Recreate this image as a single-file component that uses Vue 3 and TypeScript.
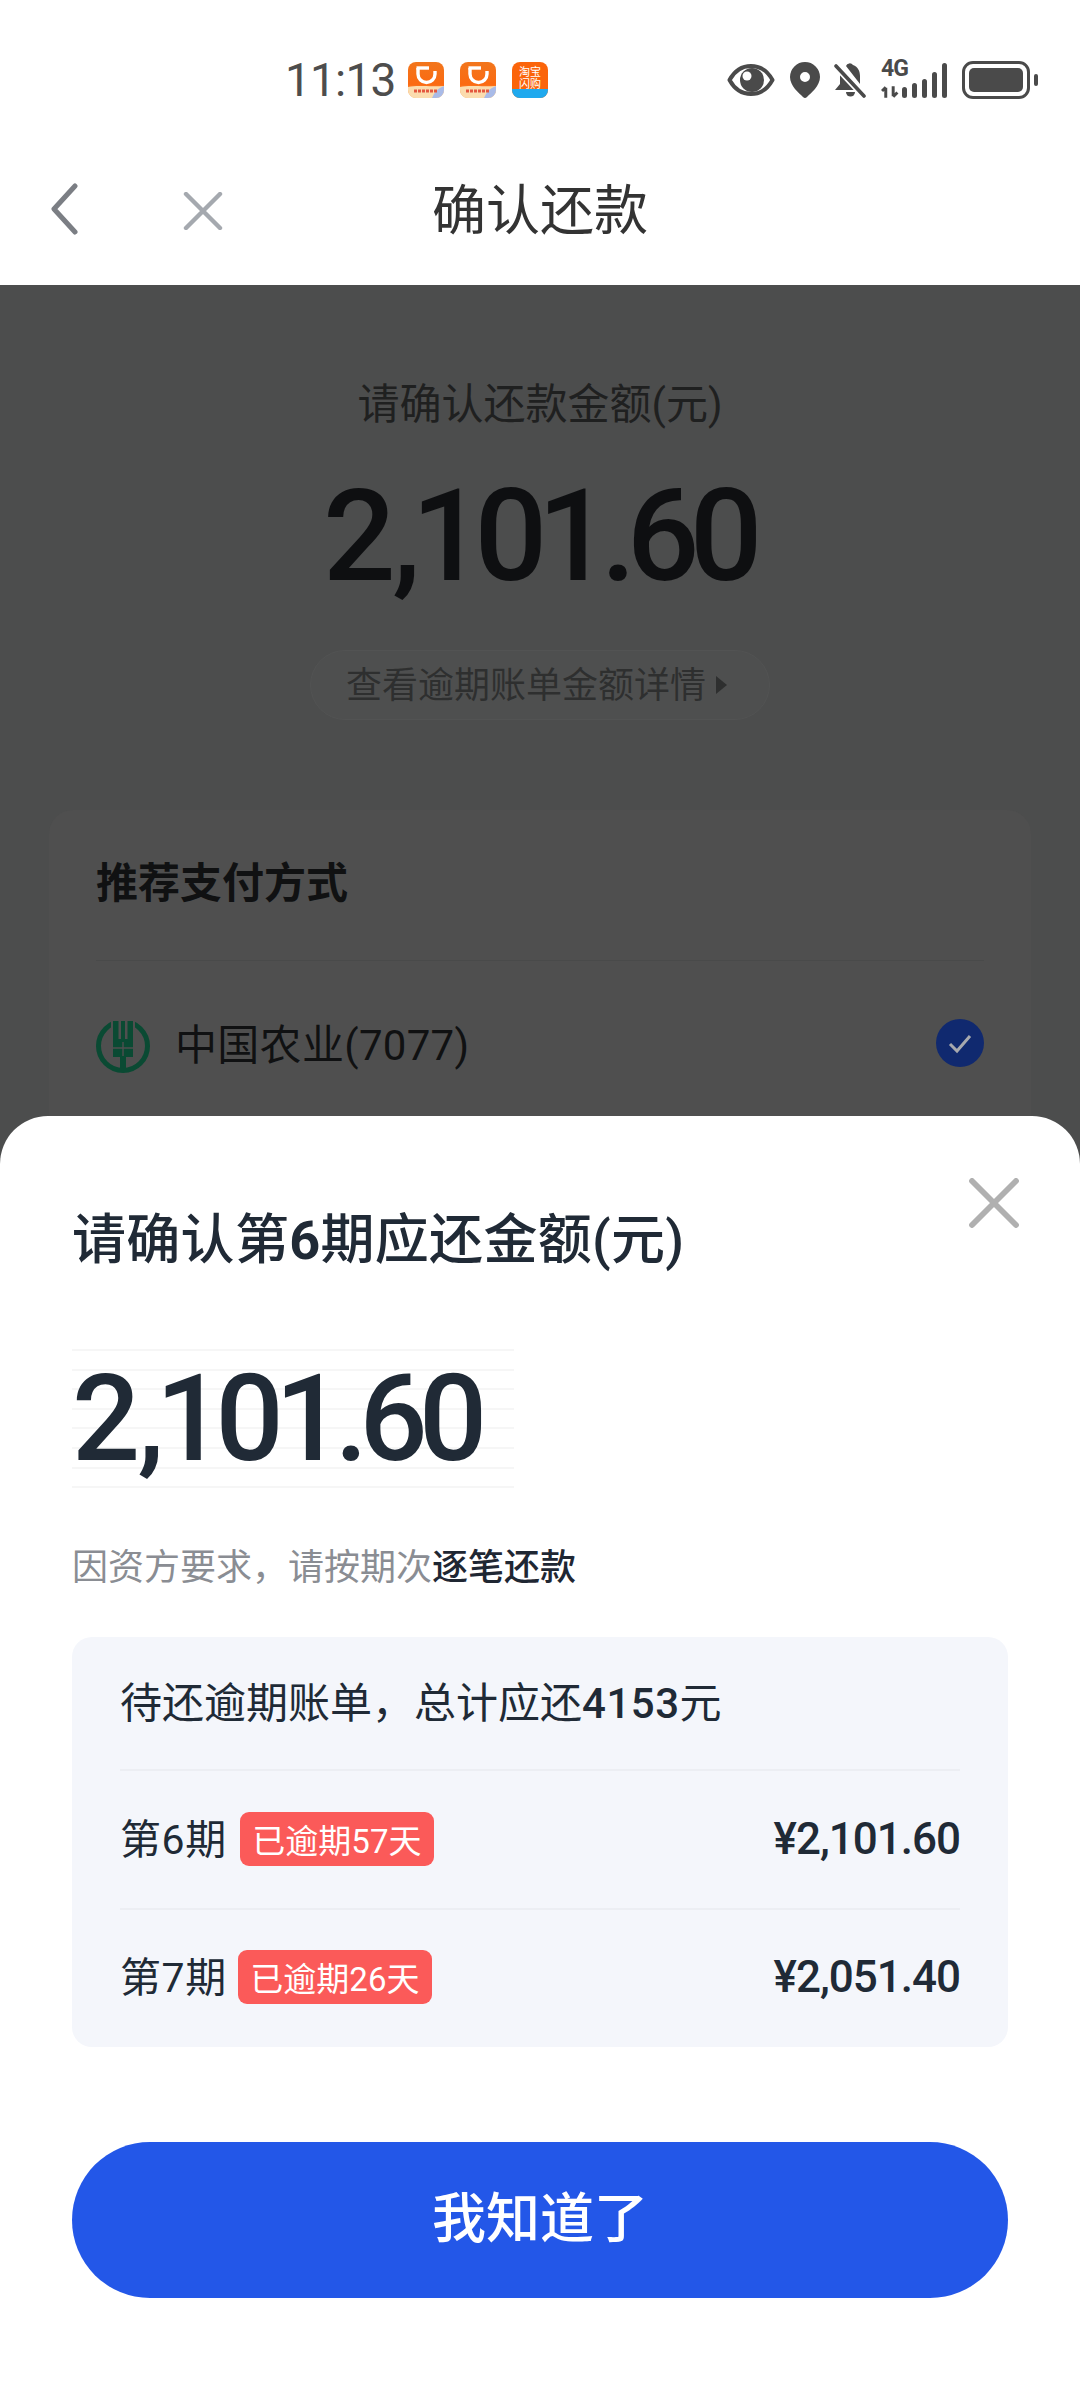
<script setup lang="ts">
interface Row { period: string; tag: string; amount: string }
const rows: Row[] = [
  { period: '第6期', tag: '已逾期57天', amount: '¥2,101.60' },
  { period: '第7期', tag: '已逾期26天', amount: '¥2,051.40' },
]
const signal: number[] = [11, 15, 19, 26, 35]
</script>

<template>
  <div class="screen">
    <header class="status">
      <span class="time">11:13</span>
      <div class="apps">
        <svg v-for="n in 2" :key="n" class="app" viewBox="0 0 36 36">
          <defs>
            <linearGradient :id="'o' + n" x1="0" y1="0" x2="0" y2="1">
              <stop offset="0" stop-color="#f2761c" />
              <stop offset=".62" stop-color="#fb6a12" />
              <stop offset="1" stop-color="#fbb56a" />
            </linearGradient>
          </defs>
          <rect width="36" height="36" rx="8" :fill="'url(#o' + n + ')'" />
          <path d="M0 25c10-2 20 0 36-1v4a8 8 0 0 1-8 8H8a8 8 0 0 1-8-8z" fill="#fbdcae" />
          <path d="M24 36c2-5 6-10 12-12v4a8 8 0 0 1-8 8z" fill="#a9bbe8" />
          <path d="M6 29h24" stroke="#e4573f" stroke-width="3" stroke-dasharray="3 1" />
          <path d="M10 6v6a8.5 8.5 0 0 0 17 0V9" fill="none" stroke="#fff" stroke-width="3.4" />
          <path d="M8.5 6H21" stroke="#fff" stroke-width="3.4" />
        </svg>
        <svg class="app" viewBox="0 0 36 36">
          <rect width="36" height="36" rx="8" fill="#fb640a" />
          <path d="M0 27h36v1a8 8 0 0 1-8 8H8a8 8 0 0 1-8-8z" fill="#1fa9ee" />
          <text x="18" y="14" class="mini">淘宝</text>
          <text x="18" y="25.5" class="mini">闪购</text>
        </svg>
      </div>
      <div class="sys">
        <svg class="eye" viewBox="0 0 48 32">
          <path d="M2.5 16C8 6 15 2 24 2s16 4 21.5 14C40 26 33 30 24 30S8 26 2.5 16z" fill="none" stroke="#4a4a4a" stroke-width="4" stroke-linejoin="round" />
          <circle cx="25" cy="16" r="12" fill="#4a4a4a" />
          <circle cx="20" cy="12" r="4.5" fill="#fff" />
        </svg>
        <svg class="pin" viewBox="0 0 30 36">
          <path fill-rule="evenodd" d="M15 0a15 15 0 0 1 15 15c0 9-9 16-13 20a3 3 0 0 1-4 0C9 31 0 24 0 15A15 15 0 0 1 15 0zm0 10a5 5 0 1 0 0 10 5 5 0 0 0 0-10z" fill="#4a4a4a" />
        </svg>
        <svg class="bell" viewBox="0 0 32 36">
          <path d="M12 4a4 4 0 0 1 7-1c5 2 7 6 7 11v8z" fill="#4a4a4a" />
          <path d="M6 11v11l-5 6h23z" fill="#4a4a4a" />
          <path d="M12 30h9a4.5 4.5 0 0 1-9 0z" fill="#4a4a4a" />
          <path d="M2 4l28 30" stroke="#fff" stroke-width="7" />
          <path d="M2 4l28 30" stroke="#4a4a4a" stroke-width="3.6" stroke-linecap="round" />
        </svg>
        <div class="net">
          <span class="g4">4G</span>
          <svg class="updown" viewBox="0 0 17 11">
            <path d="M4.5 11V1.5M1 4.5l3.5-3.5M11.5 0v9.5M15.5 6l-4 4" fill="none" stroke="#4a4a4a" stroke-width="2.8" />
          </svg>
          <div class="bars">
            <i v-for="(h, i) in signal" :key="i" class="bar" :style="{ height: h + 'px' }"></i>
          </div>
        </div>
        <div class="battery"><i class="level"></i></div>
        <i class="nub"></i>
      </div>
    </header>

    <nav class="nav">
      <svg class="back" viewBox="0 0 30 52">
        <path d="M26 3L5 26l21 23" fill="none" stroke="#7b7e84" stroke-width="5" stroke-linecap="round" stroke-linejoin="round" />
      </svg>
      <svg class="cross" viewBox="0 0 40 38">
        <path d="M3 2l34 34M37 2L3 36" fill="none" stroke="#a5a9af" stroke-width="4.4" stroke-linecap="round" />
      </svg>
      <h1 class="nav-title">确认还款</h1>
    </nav>

    <main class="dim">
      <p class="dim-label">请确认还款金额(元)</p>
      <p class="dim-amount">2<span class="comma">,</span>101.60</p>
      <div class="pill"><span class="pill-text">查看逾期账单金额详情</span><i class="tri"></i></div>
      <section class="card">
        <h2 class="card-title">推荐支付方式</h2>
        <div class="card-row">
          <svg class="abc" viewBox="0 0 54 54">
            <circle cx="27" cy="27" r="24.5" fill="none" stroke="#0a4a33" stroke-width="5" />
            <path d="M15 0h24v20H15z" fill="#4f4f4f" />
            <path d="M17 2h5.5v20H17zM31.5 2H37v20h-5.5zM25 2h4v20h-4z" fill="#0a4a33" />
            <path d="M17 20h20v18H17zM24 37h6v16h-6z" fill="#0a4a33" />
            <path d="M17 29h20M27 23v14" stroke="#4f4f4f" stroke-width="1.4" />
          </svg>
          <span class="bank">中国农业(7077)</span>
          <svg class="tick" viewBox="0 0 48 48">
            <circle cx="24" cy="24" r="24" fill="#10296f" />
            <path d="M14 25l7 7 13-15" fill="none" stroke="#a7a9ae" stroke-width="3" />
          </svg>
        </div>
      </section>
    </main>

    <section class="sheet">
      <svg class="sheet-close" viewBox="0 0 50 50">
        <path d="M3 3l44 44M47 3L3 47" fill="none" stroke="#b0b0b0" stroke-width="5.8" stroke-linecap="round" />
      </svg>
      <h2 class="sheet-title">请确认第<b>6</b>期应还金额(元)</h2>
      <div class="hero"><span class="hero-num">2<span class="comma">,</span>101.60</span></div>
      <p class="note">因资方要求，请按期次<b>逐笔还款</b></p>
      <div class="panel">
        <div class="panel-head"><span class="head-text">待还逾期账单，总计应还<b>4153</b>元</span></div>
        <div v-for="r in rows" :key="r.period" class="panel-row">
          <span class="period">{{ r.period }}</span>
          <span class="tag">{{ r.tag }}</span>
          <span class="price">{{ r.amount }}</span>
        </div>
      </div>
      <button class="cta" type="button"><span class="cta-text">我知道了</span></button>
    </section>
  </div>
</template>

<style>
html, body { margin: 0; background: #fff; }
</style>

<style scoped>
.screen {
  position: relative;
  width: 1080px;
  height: 2400px;
  overflow: hidden;
  background: #fff;
  font-family: Roboto, "Noto Sans CJK SC", sans-serif;
}
p, h1, h2 { margin: 0; font-weight: 400; }
i { display: block; }

.status {
  display: flex;
  align-items: center;
  height: 128px;
  box-sizing: border-box;
  padding: 32px 42px 0 285px;
}
.time { font-size: 46px; color: #4d4d4d; letter-spacing: -0.8px; line-height: 50px; width: 123px; }
.apps { display: flex; gap: 16px; }
.app { width: 36px; height: 36px; }
.mini { font-size: 11px; fill: #fff; text-anchor: middle; }
.sys { margin-left: auto; display: flex; align-items: center; }
.eye { width: 48px; height: 32px; }
.pin { width: 30px; height: 36px; margin-left: 15px; }
.bell { width: 32px; height: 36px; margin-left: 14px; }
.net { position: relative; margin-left: 15px; width: 66px; height: 36px; }
.g4 { position: absolute; left: 0; top: -5px; font-size: 23px; font-weight: 700; color: #4a4a4a; line-height: 24px; letter-spacing: -1px; }
.updown { position: absolute; left: 0; bottom: 0; width: 18px; height: 12px; }
.bars { position: absolute; right: 0; bottom: 0; display: flex; align-items: flex-end; gap: 4.5px; }
.bar { width: 5.5px; background: #4a4a4a; border-radius: 3px; }
.battery {
  box-sizing: border-box;
  width: 68px; height: 38px;
  margin-left: 15px;
  padding: 4px;
  border: 3px solid #4a4a4a;
  border-radius: 11px;
}
.level { width: 100%; height: 100%; background: #4a4a4a; border-radius: 5px; }
.nub { width: 4px; height: 12px; margin-left: 4px; background: #4a4a4a; border-radius: 2px; }

.nav {
  position: relative;
  height: 157px;
  display: flex;
  align-items: center;
  justify-content: center;
}
.back { position: absolute; left: 49px; top: 55px; width: 30px; height: 52px; }
.cross { position: absolute; left: 183px; top: 64px; width: 40px; height: 38px; }
.nav-title { font-size: 54px; color: #333; line-height: 70px; margin-top: 11px; }

.dim {
  height: 900px;
  background: #4c4d4d;
  display: flex;
  flex-direction: column;
  align-items: center;
  padding-top: 90px;
  box-sizing: border-box;
}
.dim-label { font-size: 42px; line-height: 60px; color: #1f2020; }
.dim-amount {
  margin-top: 26px;
  margin-right: 4px;
  font-size: 128px; line-height: 150px; font-weight: 500;
  letter-spacing: -9.6px;
  color: #0e0f11;
}
.comma { margin-left: 6px; }
.pill {
  margin-top: 39px;
  height: 70px;
  width: 460px;
  box-sizing: border-box;
  padding-left: 35px;
  border-radius: 35px;
  background: #4e4f4f;
  border: 1px solid #525353;
  display: flex;
  align-items: center;
  font-size: 36px;
  color: #2e2f2f;
}
.pill-text { margin-top: -7px; }
.tri { margin-left: 10px; width: 0; height: 0; border-left: 11px solid #2e2f2f; border-top: 9px solid transparent; border-bottom: 9px solid transparent; }
.card {
  margin-top: 90px;
  width: 982px;
  flex: 1;
  box-sizing: border-box;
  padding: 44px 47px 0;
  border-radius: 24px 24px 0 0;
  background: #4f4f4f;
}
.card-title { font-size: 42px; line-height: 60px; font-weight: 700; color: #101112; padding-bottom: 46px; border-bottom: 1px solid #494a4a; }
.card-row { display: flex; align-items: center; margin-top: 58px; }
.abc { width: 54px; height: 54px; }
.bank { margin-left: 25px; font-size: 42px; line-height: 54px; letter-spacing: 0.3px; color: #101112; }
.tick { margin-left: auto; width: 48px; height: 48px; margin-bottom: 6px; }

.sheet {
  position: absolute;
  left: 0; right: 0; bottom: 0;
  height: 1284px;
  box-sizing: border-box;
  padding: 90px 72px 0;
  background: #fff;
  border-radius: 48px 48px 0 0;
}
.sheet-close { position: absolute; right: 61px; top: 62px; width: 50px; height: 50px; }
.sheet-title { font-size: 54px; line-height: 70px; font-weight: 500; letter-spacing: 0.3px; color: #202a36; white-space: nowrap; }
.sheet-title b { font-weight: 700; }
.hero {
  margin-top: 73px;
  width: 442px;
  height: 140px;
  display: flex;
  align-items: center;
  background-image: repeating-linear-gradient(to bottom, #f6f6f6 0 2px, transparent 2px 19.6px);
}
.hero-num {
  font-size: 120px; line-height: 140px; font-weight: 500;
  letter-spacing: -8.6px;
  color: #202a36;
}
.note { margin-top: 54px; font-size: 36px; line-height: 50px; color: #8a8d93; }
.note b { font-weight: 500; color: #1f2733; }
.panel {
  margin-top: 44px;
  height: 410px;
  box-sizing: border-box;
  padding: 0 48px;
  border-radius: 20px;
  background: #f4f6fb;
}
.panel-head {
  height: 134px;
  display: flex;
  align-items: center;
  font-size: 42px;
  color: #202a36;
  border-bottom: 2px solid #eceef3;
  box-sizing: border-box;
}
.head-text { margin-top: -8px; }
.panel-head b { font-weight: 500; letter-spacing: 0.5px; }
.panel-row {
  height: 137px;
  display: flex;
  align-items: center;
  box-sizing: border-box;
}
.panel-row + .panel-row { border-top: 2px solid #eceef3; }
.panel-row + .panel-row .tag { margin-left: 11px; }
.period { font-size: 41px; letter-spacing: 0.6px; color: #202a36; margin-top: -7px; }
.tag {
  margin-left: 13px;
  margin-top: -2px;
  height: 54px;
  padding: 0 12.5px;
  display: flex;
  align-items: center;
  border-radius: 9px;
  background: #fb5a59;
  color: #fff;
  font-size: 33px;
}
.price { margin-left: auto; font-size: 44px; font-weight: 500; letter-spacing: -1px; color: #202a36; margin-top: -2px; }
.cta {
  display: block;
  margin-top: 95px;
  width: 100%;
  height: 156px;
  border: 0;
  padding: 0;
  border-radius: 78px;
  background: #2357e8;
  color: #fff;
  font-family: inherit;
  font-size: 54px;
  font-weight: 500;
}
.cta-text { position: relative; top: -6px; }
</style>
